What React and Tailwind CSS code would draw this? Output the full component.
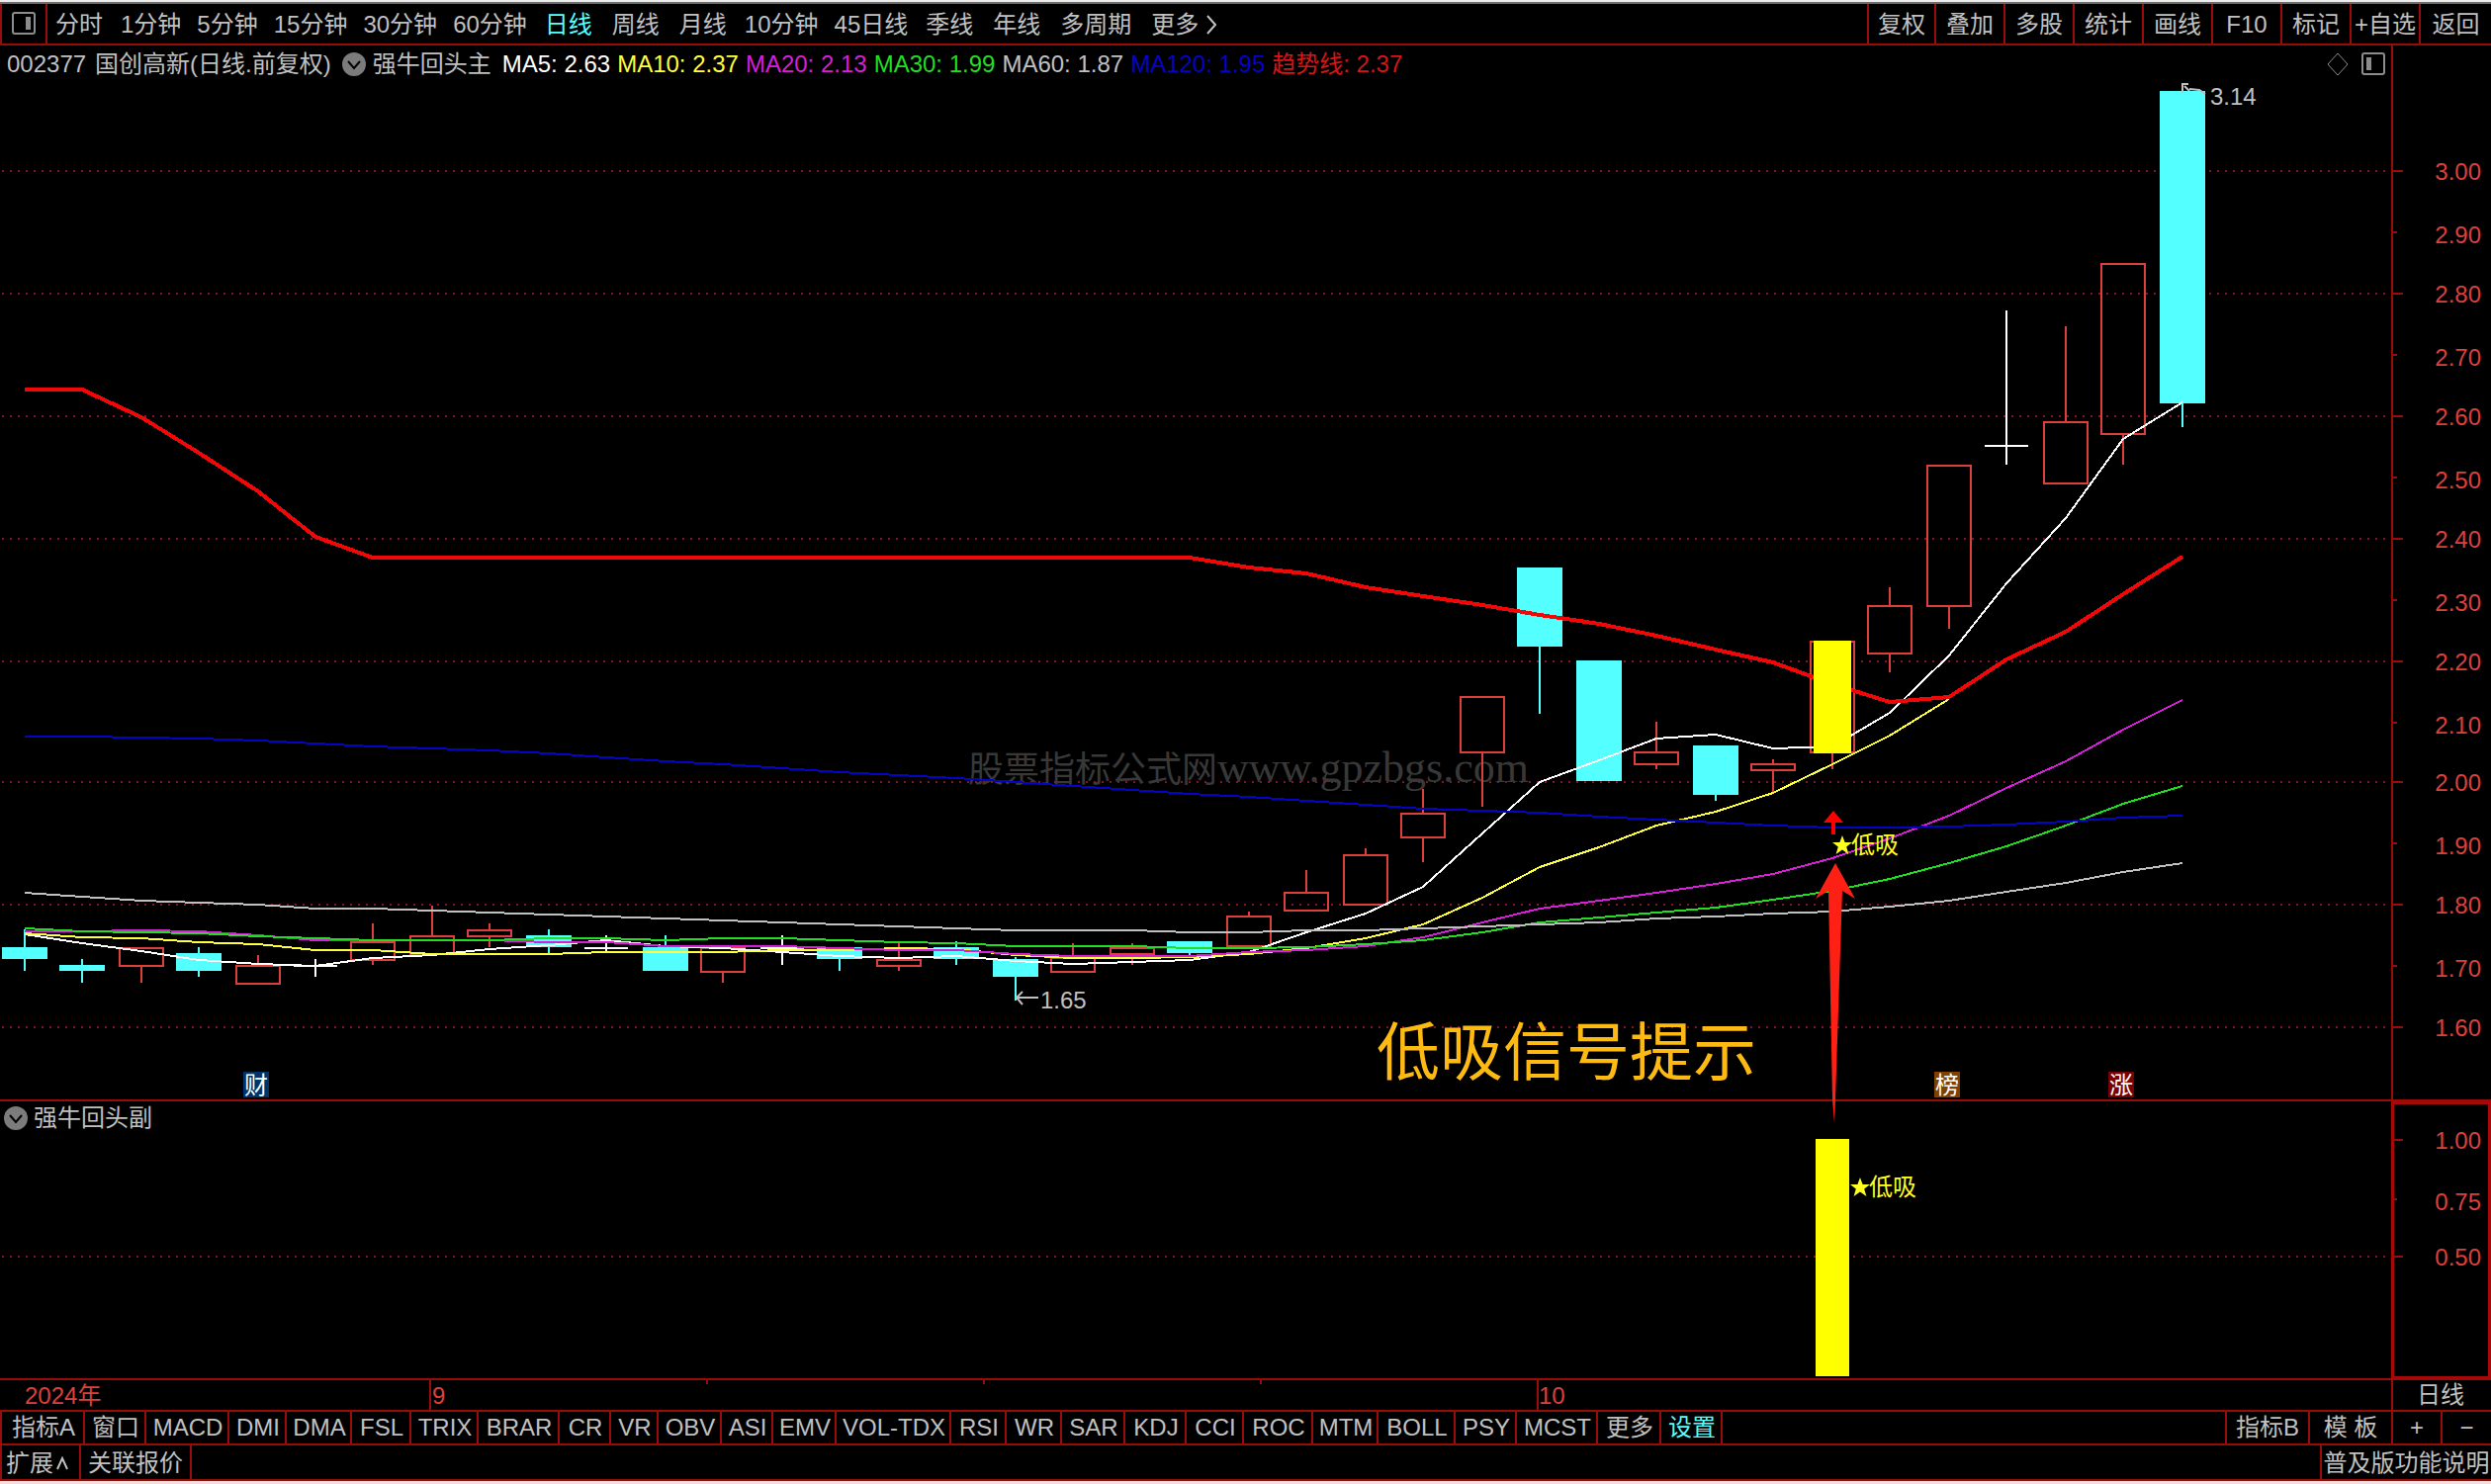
import clsx from 'clsx'

const periods = [
  { label: '分时', pad: 'px-0.5' },
  { label: '1分钟' },
  { label: '5分钟' },
  { label: '15分钟' },
  { label: '30分钟' },
  { label: '60分钟' },
  { label: '日线', pad: 'px-0.5', active: true },
  { label: '周线', pad: 'px-0.5' },
  { label: '月线', pad: 'px-0.5' },
  { label: '10分钟' },
  { label: '45日线' },
  { label: '季线', pad: 'px-0.5' },
  { label: '年线', pad: 'px-0.5' },
  { label: '多周期', pad: 'px-0.5' },
]

const tools = [
  { label: '复权', w: 'w-[68px]' },
  { label: '叠加', w: 'w-[70px]' },
  { label: '多股', w: 'w-[70px]' },
  { label: '统计', w: 'w-[70px]' },
  { label: '画线', w: 'w-[70px]' },
  { label: 'F10', w: 'w-[70px]' },
  { label: '标记', w: 'w-[70px]' },
  { label: '+自选', w: 'w-[70px]' },
  { label: '返回', w: 'w-[73px]' },
]

const averages = [
  { text: 'MA5: 2.63', color: 'text-white' },
  { text: 'MA10: 2.37', color: 'text-[#ffff3c]' },
  { text: 'MA20: 2.13', color: 'text-[#d81fd8]' },
  { text: 'MA30: 1.99', color: 'text-[#22dd22]' },
  { text: 'MA60: 1.87', color: 'text-[#c0c0c0]' },
  { text: 'MA120: 1.95', color: 'text-[#0404c4]' },
  { text: '趋势线: 2.37', color: 'text-[#d81414]' },
]

const indicators = [
  { label: '指标A', w: 'w-[84px]' },
  { label: '窗口', w: 'w-[62px]' },
  { label: 'MACD', w: 'w-[84px]' },
  { label: 'DMI', w: 'w-[58px]' },
  { label: 'DMA', w: 'w-[66px]' },
  { label: 'FSL', w: 'w-[60px]' },
  { label: 'TRIX', w: 'w-[68px]' },
  { label: 'BRAR', w: 'w-[82px]' },
  { label: 'CR', w: 'w-[52px]' },
  { label: 'VR', w: 'w-[48px]' },
  { label: 'OBV', w: 'w-[64px]' },
  { label: 'ASI', w: 'w-[52px]' },
  { label: 'EMV', w: 'w-[64px]' },
  { label: 'VOL-TDX', w: 'w-[116px]' },
  { label: 'RSI', w: 'w-[56px]' },
  { label: 'WR', w: 'w-[56px]' },
  { label: 'SAR', w: 'w-[64px]' },
  { label: 'KDJ', w: 'w-[62px]' },
  { label: 'CCI', w: 'w-[58px]' },
  { label: 'ROC', w: 'w-[70px]' },
  { label: 'MTM', w: 'w-[66px]' },
  { label: 'BOLL', w: 'w-[78px]' },
  { label: 'PSY', w: 'w-[62px]' },
  { label: 'MCST', w: 'w-[82px]' },
  { label: '更多', w: 'w-[64px]' },
  { label: '设置', w: 'w-[62px]' },
]

// [kind, body top, body bottom, wick top, wick bottom]
const candles = [
  ['down', 958, 970, 940, 982],
  ['down', 976, 982, 970, 994],
  ['up', 958, 978, 958, 994],
  ['down', 964, 982, 958, 988],
  ['up', 976, 996, 966, 996],
  ['flat', 976, 978, 970, 988],
  ['up', 952, 972, 934, 976],
  ['up', 946, 966, 916, 966],
  ['up', 940, 948, 934, 958],
  ['down', 946, 958, 940, 964],
  ['flat', 958, 960, 946, 962],
  ['down', 958, 982, 946, 982],
  ['up', 958, 984, 958, 994],
  ['flat', 958, 960, 946, 976],
  ['down', 958, 970, 958, 982],
  ['up', 970, 978, 954, 982],
  ['down', 958, 970, 952, 976],
  ['down', 970, 988, 968, 1012],
  ['up', 968, 984, 954, 984],
  ['up', 958, 966, 954, 976],
  ['down', 952, 964, 952, 966],
  ['up', 926, 958, 922, 958],
  ['up', 902, 922, 880, 922],
  ['up', 864, 916, 858, 916],
  ['up', 822, 848, 798, 872],
  ['up', 704, 762, 704, 816],
  ['down', 574, 654, 574, 722],
  ['down', 668, 790, 668, 790],
  ['up', 760, 774, 730, 778],
  ['down', 754, 804, 754, 810],
  ['up', 772, 780, 768, 803],
  ['signal', 648, 762, 648, 778],
  ['up', 612, 662, 594, 680],
  ['up', 470, 614, 470, 636],
  ['flat', 450, 452, 314, 470],
  ['up', 426, 490, 330, 490],
  ['up', 266, 440, 266, 470],
  ['down', 92, 408, 92, 432],
]

const ma5 = [945, 954, 962, 971, 975, 977, 969, 966, 960, 956, 951, 957, 959, 963, 967, 969, 967, 972, 975, 973, 971, 963, 943, 924, 897, 843, 791, 769, 747, 743, 757, 755, 721, 663, 590, 524, 444, 407]
const ma10 = [944, 948, 949, 953, 955, 961, 961, 965, 965, 965, 963, 963, 963, 961, 961, 959, 960, 966, 969, 969, 968, 965, 959, 949, 935, 908, 877, 857, 835, 821, 802, 773, 744, 707]
const ma20 = [942, 942, 941, 942, 946, 951, 951, 951, 951, 953, 953, 957, 957, 957, 959, 961, 961, 965, 967, 967, 967, 963, 961, 957, 948, 933, 919, 911, 903, 894, 884, 868, 848, 825, 797, 770, 738, 708]
const ma30 = [939, 942, 943, 944, 947, 949, 951, 951, 951, 949, 949, 951, 949, 949, 951, 953, 954, 957, 957, 957, 959, 959, 958, 955, 951, 943, 933, 928, 923, 918, 910, 901, 889, 873, 856, 835, 813, 795]
const ma60 = [903, 907, 911, 913, 915, 919, 919, 921, 923, 925, 927, 929, 931, 933, 935, 937, 939, 941, 941, 941, 943, 943, 941, 941, 939, 937, 935, 933, 929, 927, 924, 922, 917, 911, 902, 893, 882, 873]
const ma120 = [745, 745, 746, 747, 749, 752, 755, 757, 759, 762, 766, 770, 773, 777, 781, 784, 787, 791, 795, 799, 803, 806, 810, 814, 818, 820, 822, 826, 829, 832, 835, 837, 837, 836, 834, 831, 827, 825]
const trend = [394, 394, 422, 458, 497, 543, 564, 564, 564, 564, 564, 564, 564, 564, 564, 564, 564, 564, 564, 564, 564, 574, 580, 594, 603, 612, 622, 631, 643, 657, 670, 692, 710, 705, 667, 639, 601, 563]

const priceTicks = [
  ['3.00', 173], ['2.90', 235], ['2.80', 297], ['2.70', 359], ['2.60', 421],
  ['2.50', 483], ['2.40', 545], ['2.30', 607], ['2.20', 669], ['2.10', 731],
  ['2.00', 791], ['1.90', 853], ['1.80', 915], ['1.70', 977], ['1.60', 1039],
]

const barX = (i) => 2 * Math.floor(12.07 + 29.485 * i) + 1
const toPoints = (ys) => ys.map((y, i) => `${barX(i)},${y}`).join(' ')

function Candle({ x, kind, top, bottom, high, low }) {
  if (kind === 'down') {
    return (
      <g className="fill-[#54ffff]">
        <rect x={x - 1} y={high} width="2" height={low - high} />
        <rect x={x - 23} y={top} width="46" height={bottom - top} />
      </g>
    )
  }
  if (kind === 'flat') {
    return (
      <g className="fill-white">
        <rect x={x - 1} y={high} width="2" height={low - high} />
        <rect x={x - 22} y={top} width="44" height="2" />
      </g>
    )
  }
  return (
    <g className="fill-[#dc403c]">
      <rect x={x - 1} y={high} width="2" height={top - high} />
      <rect x={x - 1} y={bottom} width="2" height={low - bottom} />
      <rect x={x - 22} y={top + 1} width="44" height={bottom - top - 2} className="fill-none stroke-[#dc403c] stroke-2" />
    </g>
  )
}

function Line({ ys, className }) {
  return <polyline points={toPoints(ys)} className={clsx('fill-none', className)} />
}

function GridLine({ y }) {
  return <line x1="2" x2="2416" y1={y} y2={y} strokeDasharray="2 6" className="stroke-[#8c1028] stroke-2" />
}

function AxisTick({ label, y, major }) {
  return (
    <g>
      <line x1="2420" x2={major ? 2430 : 2424} y1={y} y2={y} className="stroke-[#990c0c] stroke-2" />
      <text x="2509" y={major ? y + 9 : y + 11} textAnchor="end" className="fill-[#dc403c] text-2xl">{label}</text>
    </g>
  )
}

function Signal({ x, y }) {
  return (
    <g className="fill-[#ffff20]">
      <path d={`M${x} ${y - 10}l2.6 7h7.4l-5.8 4.6 2.2 7.4-6.4-4.4-6.4 4.4 2.2-7.4-5.8-4.6h7.4z`} />
      <text x={x + 9} y={y + 8} className="text-2xl">低吸</text>
    </g>
  )
}

function Badge({ x, text, className }) {
  return (
    <g>
      <rect x={x} y="1084" width="26" height="26" className={className} />
      <text x={x + 13} y="1106" textAnchor="middle" className="fill-white text-2xl">{text}</text>
    </g>
  )
}

function PanelIcon({ side }) {
  return (
    <svg viewBox="0 0 24 24" className="h-6 w-6 fill-none stroke-[#8c8c8c] stroke-2">
      <rect x="1" y="1" width="22" height="21" rx="2" />
      <rect x={side === 'right' ? 14 : 5} y="5" width="5" height="13" className="fill-[#8c8c8c] stroke-none" />
    </svg>
  )
}

function DropIcon() {
  return (
    <svg viewBox="0 0 24 24" className="h-6 w-6">
      <circle cx="12" cy="12" r="12" className="fill-[#7c7c7c]" />
      <path d="M6 9l6 7 6-7" className="fill-none stroke-black stroke-2" />
    </svg>
  )
}

function TopBar() {
  return (
    <header className="flex h-[42px] items-stretch border-b-2 border-[#990c0c]">
      <button aria-label="侧栏" className="flex w-12 items-center justify-center border-x-2 border-[#990c0c]">
        <PanelIcon side="right" />
      </button>
      <nav className="flex flex-1 items-center gap-4 pl-1.5 pt-0.5">
        {periods.map((p) => (
          <button key={p.label} className={clsx('whitespace-nowrap', p.pad, p.active && 'text-[#54ffff]')}>
            {p.label}
          </button>
        ))}
        <button className="flex items-center gap-2 whitespace-nowrap px-0.5">
          更多
          <svg viewBox="0 0 10 20" className="h-5 w-[10px] fill-none stroke-[#c0c0c0] stroke-2">
            <path d="M1 1l8 9-8 9" />
          </svg>
        </button>
      </nav>
      {tools.map((t) => (
        <button key={t.label} className={clsx('whitespace-nowrap border-l-2 border-[#990c0c] pt-0.5', t.w)}>{t.label}</button>
      ))}
    </header>
  )
}

function MainChart() {
  return (
    <section className="border-b-2 border-[#990c0c]">
      <div className="flex h-[34px]">
        <div className="flex flex-1 items-center gap-[7px] whitespace-nowrap pl-[7px] pt-[3px]">
          <span>002377</span>
          <span className="ml-0.5">国创高新(日线.前复权)</span>
          <button aria-label="主图指标" className="ml-1"><DropIcon /></button>
          <span>强牛回头主</span>
          <div className="ml-1 flex gap-[7px]">
            {averages.map((a) => (
              <span key={a.text} className={a.color}>{a.text}</span>
            ))}
          </div>
        </div>
        <div className="flex items-center gap-3 pr-1.5 pt-[3px]">
          <button aria-label="标记点">
            <svg viewBox="0 0 24 24" className="h-6 w-6 fill-none stroke-[#8c8c8c]">
              <path d="M12 1l10 11-10 11L2 12z" />
            </svg>
          </button>
          <button aria-label="右侧栏"><PanelIcon side="left" /></button>
        </div>
        <div className="w-[101px] border-l-2 border-[#990c0c]" />
      </div>
      <svg viewBox="0 80 2519 1032" className="block w-full">
        <g shapeRendering="crispEdges">
          {priceTicks.map(([label, y], i) => i % 2 === 0 && <GridLine key={label} y={y} />)}
        </g>
        <text x="979" y="791" className="fill-[#383838] font-['Liberation_Serif','Noto_Sans_CJK_SC',serif] text-[36px]">
          股票指标公式网<tspan className="text-[44px]">www.gpzbgs.com</tspan>
        </text>
        <g shapeRendering="crispEdges">
          <rect x="2418" y="80" width="2" height="1032" className="fill-[#990c0c]" />
          {candles.map(([kind, top, bottom, high, low], i) => (
            <Candle key={i} x={barX(i)} kind={kind} top={top} bottom={bottom} high={high} low={low} />
          ))}
          <Line ys={ma5} className="stroke-white stroke-2" />
          <Line ys={ma10} className="stroke-[#ffff3c] stroke-2" />
          <Line ys={ma20} className="stroke-[#d81fd8] stroke-2" />
          <Line ys={ma30} className="stroke-[#22dd22] stroke-2" />
          <Line ys={ma60} className="stroke-[#c0c0c0] stroke-2" />
          <Line ys={ma120} className="stroke-[#0404c4] stroke-2" />
          <Line ys={trend} className="stroke-[#f00808] stroke-4" />
          <rect x="1834" y="648" width="38" height="114" className="fill-[#ffff00]" />
        </g>
        {priceTicks.map(([label, y], i) => <AxisTick key={label} label={label} y={y} major={i % 2 === 0} />)}

        <g className="fill-none stroke-[#c0c0c0] stroke-2">
          <path d="M2207 94v-9h6M2209 87l5 5M2214 90l10 1 6 4" />
          <path d="M1028 1009h22M1034 1003l-6 6 6 7" />
        </g>
        <text x="2235" y="106" className="fill-[#c0c0c0] text-2xl">3.14</text>
        <text x="1052" y="1020" className="fill-[#c0c0c0] text-2xl">1.65</text>

        <path d="M1854 820l10 12h-8v12h-4v-12h-8z" className="fill-[#ff0000]" />
        <Signal x={1863} y={855} />
        <text x="1392" y="1087" className="fill-[#fdba12] text-[64px]">低吸信号提示</text>

        <Badge x={246} text="财" className="fill-[#003468]" />
        <Badge x={1956} text="榜" className="fill-[#804000]" />
        <Badge x={2132} text="涨" className="fill-[#780000]" />
        <path d="M1856 873l20 36-13-8-7 211h-3l-4-211-13 8z" className="fill-[#ff2015]" />
      </svg>
    </section>
  )
}

function SubChart() {
  return (
    <section className="border-b-2 border-[#990c0c]">
      <div className="flex h-[34px]">
        <div className="flex flex-1 items-center gap-1.5 pl-1">
          <button aria-label="副图指标"><DropIcon /></button>
          <span>强牛回头副</span>
        </div>
        <div className="w-[101px] border-x-3 border-t-3 border-[#a80808]" />
      </div>
      <svg viewBox="0 1148 2519 278" className="block w-full overflow-visible">
        <path d="M1853 1112h3l-1 24z" className="fill-[#ff2015]" />
        <g shapeRendering="crispEdges">
          <GridLine y={1271} />
          <rect x="1836" y="1152" width="34" height="240" className="fill-[#ffff00]" />
          <g className="fill-[#990c0c]">
            <rect x="0" y="1394" width="2519" height="2" />
            <rect x="2418" y="1394" width="2" height="32" />
            <rect x="434" y="1396" width="2" height="30" />
            <rect x="714" y="1396" width="2" height="4" />
            <rect x="994" y="1396" width="2" height="4" />
            <rect x="1274" y="1396" width="2" height="4" />
            <rect x="1554" y="1396" width="2" height="30" />
          </g>
          <path d="M2418 1148h3v244h95v-244h3v247h-101z" className="fill-[#a80808]" />
        </g>
        <AxisTick label="1.00" y={1153} major />
        <AxisTick label="0.75" y={1213} />
        <AxisTick label="0.50" y={1271} major />
        <Signal x={1881} y={1201} />
        <g className="fill-[#dc403c] text-2xl">
          <text x="25" y="1420">2024年</text>
          <text x="437" y="1420">9</text>
          <text x="1556" y="1420">10</text>
        </g>
        <text x="2468" y="1419" textAnchor="middle" className="fill-[#c0c0c0] text-2xl">日线</text>
      </svg>
    </section>
  )
}

function IndicatorBar() {
  return (
    <nav className="flex h-[34px] items-stretch border-b-2 border-l-2 border-[#990c0c]">
      {indicators.map((t) => (
        <button
          key={t.label}
          className={clsx('whitespace-nowrap border-r-2 border-[#990c0c] pl-0.5', t.w, t.label === '设置' && 'text-[#54ffff]')}
        >
          {t.label}
        </button>
      ))}
      <div className="flex-1" />
      <button className="w-[84px] border-l-2 border-[#990c0c]">指标B</button>
      <button className="w-[84px] border-l-2 border-[#990c0c]">模 板</button>
      <button className="w-[50px] border-l-2 border-[#990c0c]">+</button>
      <button className="w-[51px] border-l-2 border-[#990c0c]">−</button>
    </nav>
  )
}

function BottomBar() {
  return (
    <footer className="flex h-9 items-stretch border-b-2 border-l-2 border-[#990c0c]">
      <button className="flex w-20 items-center gap-0.5 border-r-2 border-[#990c0c] pl-1 pt-0.5">
        扩展
        <svg viewBox="0 0 14 14" className="h-[14px] w-[14px] fill-none stroke-[#c0c0c0] stroke-2">
          <path d="M2 13L7 2l5 11" />
        </svg>
      </button>
      <button className="w-28 border-r-2 border-[#990c0c] pt-0.5">关联报价</button>
      <div className="flex-1" />
      <button className="w-[173px] whitespace-nowrap border-l-2 border-[#990c0c] pt-0.5">普及版功能说明</button>
    </footer>
  )
}

export default function App() {
  return (
    <div className="overflow-hidden border-t-2 border-b-3 border-t-[#ececec] border-b-[#f8dcdc] bg-black font-['Liberation_Sans','Noto_Sans_CJK_SC',sans-serif] text-2xl leading-none text-[#c0c0c0]">
      <div className="h-0.5 bg-[#6c6c6c]" />
      <TopBar />
      <MainChart />
      <SubChart />
      <IndicatorBar />
      <BottomBar />
    </div>
  )
}
